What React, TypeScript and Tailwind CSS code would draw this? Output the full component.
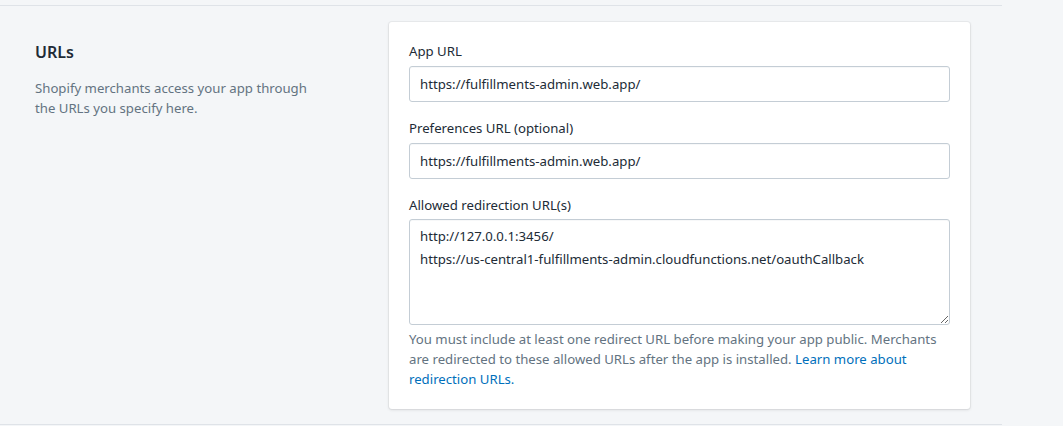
const FIELDS = [
  { label: "App URL", value: "https://fulfillments-admin.web.app/" },
  { label: "Preferences URL (optional)", value: "https://fulfillments-admin.web.app/" },
];

const REDIRECTS = [
  "http://127.0.0.1:3456/",
  "https://us-central1-fulfillments-admin.cloudfunctions.net/oauthCallback",
];

export default function App() {
  return (
    <div className="h-[426px] w-[1063px] overflow-hidden bg-[#f4f6f8] pt-[5px] font-['Noto_Sans',sans-serif] text-[13.2px] text-[#212b36]">
      <div className="flex w-[1002px] border-y border-[#dfe3e8] pb-[15px] pt-[16px] pr-[32px]">
        <div className="w-[389px] shrink-0 pl-[35px] pt-[18px]">
          <h2 className="text-[16px] leading-6 font-semibold text-[#212b36]">URLs</h2>
          <p className="mt-[14px] w-[280px] leading-5 text-[#637381]">
            Shopify merchants access your app through the URLs you specify here.
          </p>
        </div>

        <div className="flex w-[581px] flex-col gap-4 rounded-[3px] bg-white px-5 pb-5 pt-[19px] shadow-[0_0_0_1px_rgba(63,63,68,0.05),0_1px_3px_0_rgba(63,63,68,0.15)]">
          {FIELDS.map((f) => (
            <div key={f.label}>
              <label className="mb-[5px] block leading-5">{f.label}</label>
              <input
                readOnly
                value={f.value}
                className="h-9 w-full rounded-[3px] border border-[#c4cdd5] bg-white px-[10px] text-[#212b36] shadow-[inset_0_1px_0_0_rgba(99,115,129,0.05)] outline-none"
              />
            </div>
          ))}

          <div>
            <label className="mb-[4px] block leading-5">Allowed redirection URL(s)</label>
            <textarea
              readOnly
              defaultValue={REDIRECTS.join("\n")}
              className="block h-[106px] w-full rounded-[3px] border border-[#c4cdd5] bg-white px-[10px] pt-[5px] leading-[23px] text-[#212b36] shadow-[inset_0_1px_0_0_rgba(99,115,129,0.05)] outline-none"
            />
            <p className="mt-1 leading-5 text-[#637381]">
              You must include at least one redirect URL before making your app public. Merchants
              are redirected to these allowed URLs after the app is installed.{" "}
              <a className="text-[#006fbb]" href="#">
                Learn more about redirection URLs.
              </a>
            </p>
          </div>
        </div>
      </div>
    </div>
  );
}
